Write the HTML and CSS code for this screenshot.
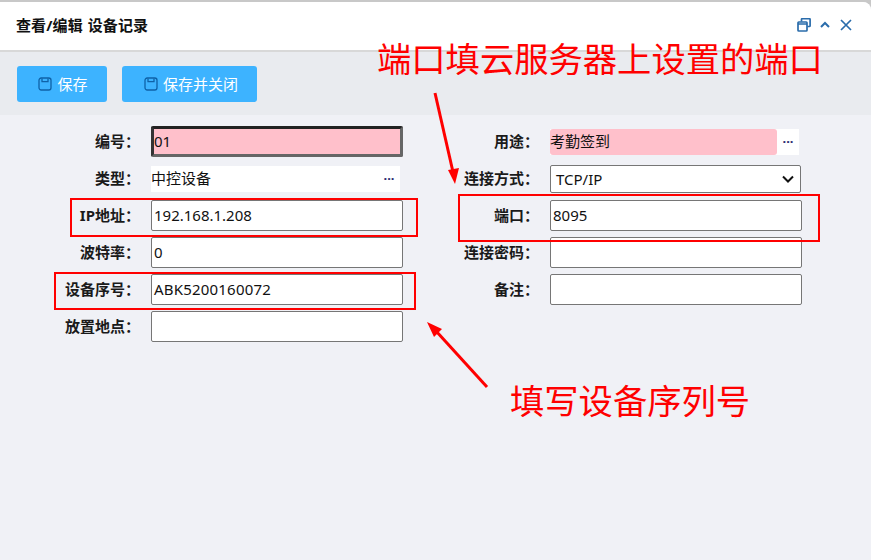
FILE: index.html
```html
<!DOCTYPE html>
<html lang="zh">
<head>
<meta charset="utf-8">
<title>查看/编辑 设备记录</title>
<link rel="stylesheet" href="styles.css">
</head>
<body>
<div class="window">
  <header class="titlebar">
    <h1 class="title">查看/编辑 设备记录</h1>
    <div class="win-tools">
      <svg class="win-icon" viewBox="0 0 14 14"><path d="M4.5 3.5V1.5a.8.8 0 0 1 .8-.8h7a.8.8 0 0 1 .8.8v6.2a.8.8 0 0 1-.8.8H10.4" class="stroke"/><rect x="1" y="4" width="9" height="9" rx=".8" class="stroke"/><path d="M1 6h9" class="stroke"/></svg>
      <svg class="win-icon" viewBox="0 0 14 14"><path d="M3 9l4-4 4 4" class="stroke thick"/></svg>
      <svg class="win-icon" viewBox="0 0 14 14"><path d="M2 2l10 10M12 2L2 12" class="stroke"/></svg>
    </div>
  </header>
  <div class="toolbar">
    <button class="btn btn-save" type="button">
      <svg class="save-icon" viewBox="0 0 14 14"><rect x="1" y="1" width="12" height="12" rx="2.2" class="save-s"/><path d="M4 1.5v3.2h6V1.5" class="save-s"/></svg>保存
    </button>
    <button class="btn btn-close" type="button">
      <svg class="save-icon" viewBox="0 0 14 14"><rect x="1" y="1" width="12" height="12" rx="2.2" class="save-s"/><path d="M4 1.5v3.2h6V1.5" class="save-s"/></svg>保存并关闭
    </button>
  </div>
  <main class="form">
    <div class="col">
      <div class="row"><label class="lbl">编号：</label><div class="field focus pink"><span>01</span></div></div>
      <div class="row"><label class="lbl">类型：</label><div class="picker"><span class="picker-text">中控设备</span><span class="dots">···</span></div></div>
      <div class="row"><label class="lbl">IP地址：</label><div class="field"><span>192.168.1.208</span></div></div>
      <div class="row"><label class="lbl">波特率：</label><div class="field"><span>0</span></div></div>
      <div class="row"><label class="lbl">设备序号：</label><div class="field"><span class="serial">ABK5200160072</span></div></div>
      <div class="row"><label class="lbl">放置地点：</label><div class="field"></div></div>
    </div>
    <div class="col">
      <div class="row"><label class="lbl">用途：</label><div class="picker wide"><span class="picker-text pink-text">考勤签到</span><span class="dots">···</span></div></div>
      <div class="row"><label class="lbl">连接方式：</label><div class="select"><span>TCP/IP</span><svg class="chev" viewBox="0 0 12 8"><path d="M1 1.5l5 5 5-5"/></svg></div></div>
      <div class="row"><label class="lbl">端口：</label><div class="field"><span>8095</span></div></div>
      <div class="row"><label class="lbl">连接密码：</label><div class="field"></div></div>
      <div class="row"><label class="lbl">备注：</label><div class="field"></div></div>
    </div>
  </main>
</div>

<div class="box box-ip"></div>
<div class="box box-port"></div>
<div class="box box-sn"></div>
<div class="note note-port">端口填云服务器上设置的端口</div>
<div class="note note-sn">填写设备序列号</div>
<svg class="arrows" viewBox="0 0 871 560">
  <path d="M435 93L453 172" class="arrow-line"/>
  <path d="M455 184L448 170L459 168Z" class="arrow-head"/>
  <path d="M487 387L436 331" class="arrow-line"/>
  <path d="M427 322L442 329L434 337Z" class="arrow-head"/>
</svg>
</body>
</html>
```
FILE: styles.css
```css
* { box-sizing: border-box; }
html, body { margin: 0; height: 100%; }
body {
  width: 871px;
  height: 560px;
  overflow: hidden;
  position: relative;
  background: #c8c8c8;
  padding-top: 2px;
  font-family: "Noto Sans", "Noto Sans CJK SC", sans-serif;
  font-size: 15px;
  color: #111;
}
.window {
  height: 558px;
  background: #f0f1f6;
  border-radius: 0 8px 0 0;
  overflow: hidden;
  display: flex;
  flex-direction: column;
}
.titlebar {
  height: 50px;
  background: #fff;
  border-bottom: 2px solid #d8d8d8;
  display: flex;
  align-items: center;
  justify-content: space-between;
  padding: 0 18px 3px 16px;
}
.title {
  margin: 0;
  font-size: 15px;
  font-weight: 700;
  color: #111;
  line-height: 20px;
  word-spacing: 1px;
  letter-spacing: 0.1px;
}
.win-tools { display: flex; align-items: center; gap: 7px; }
.win-icon { width: 14px; height: 14px; display: block; }
.stroke { fill: none; stroke: #2a6cab; stroke-width: 1.7; }
.thick { stroke-width: 2; }
.toolbar {
  height: 63px;
  background: #e9ebef;
  display: flex;
  align-items: center;
  gap: 15px;
  padding: 1px 17px 0;
}
.btn {
  height: 36px;
  border: 0;
  border-radius: 3px;
  background: #3db3ff;
  color: #fff;
  font: inherit;
  line-height: 20px;
  display: flex;
  align-items: center;
  justify-content: center;
  gap: 5px;
  padding: 0;
}
.save-icon { width: 14px; height: 14px; display: block; }
.btn-save { width: 90px; padding-left: 2px; }
.btn-close { width: 135px; padding-left: 3px; }
.save-s { fill: none; stroke: #0f62a8; stroke-width: 1.3; }
.form {
  padding: 8px 0 0 0;
  display: flex;
}
.col { width: 399px; flex: none; }
.col + .col { width: 420px; }
.row {
  height: 37px;
  display: flex;
  align-items: center;
}
.lbl {
  width: 140px;
  text-align: right;
  font-weight: 700;
  font-size: 15px;
  line-height: 20px;
  flex: none;
  white-space: nowrap;
  margin-right: 11px;
  padding-bottom: 1px;
  color: #1a1a1a;
}
.field {
  width: 252px;
  height: 31px;
  flex: none;
  background: #fff;
  border: 1px solid #767676;
  border-radius: 2px;
  padding: 0 2px;
  display: flex;
  align-items: center;
  color: #111;
  line-height: 20px;
}
.field span { display: block; margin-top: -1px; }
.serial { letter-spacing: 0.2px; }
.field.focus { border: 3px solid #666; border-top-color: #222; border-left-color: #333; padding: 0; }
.pink { background: #ffc0cb; }
.picker {
  width: 249px;
  height: 26px;
  flex: none;
  background: #fff;
  display: flex;
  align-items: center;
  justify-content: space-between;
  line-height: 20px;
}
.picker-text { flex: 1; height: 100%; display: flex; align-items: center; padding-bottom: 1px; }
.pink-text { background: #ffc0cb; border-radius: 3px; }
.dots {
  width: 22px;
  text-align: center;
  color: #2b2b70;
  font-weight: 700;
  font-size: 13px;
  flex: none;
  line-height: 1;
}
.select {
  width: 251px;
  height: 28px;
  flex: none;
  background: #fff;
  border: 1px solid #767676;
  border-radius: 2px;
  padding: 0 6px 0 5px;
  display: flex;
  align-items: center;
  justify-content: space-between;
  line-height: 20px;
}
.chev { width: 12px; height: 8px; display: block; }
.chev path { fill: none; stroke: #111; stroke-width: 2; }

/* annotations drawn over the screenshot */
.box { position: absolute; border: 2px solid #f00; }
.box-ip { left: 70px; top: 198px; width: 348px; height: 39px; }
.box-port { left: 458px; top: 194px; width: 362px; height: 48px; }
.box-sn { left: 54px; top: 272px; width: 362px; height: 38px; }
.note {
  position: absolute;
  color: #f00;
  font-size: 34.3px;
  line-height: 40px;
  white-space: nowrap;
  font-family: "Noto Sans CJK SC", sans-serif;
}
.note-port { left: 377px; top: 37px; }
.note-sn { left: 510px; top: 379px; }
.arrows { position: absolute; left: 0; top: 0; width: 871px; height: 560px; pointer-events: none; }
.arrow-line { fill: none; stroke: #f00; stroke-width: 3; }
.arrow-head { fill: #f00; }
```
